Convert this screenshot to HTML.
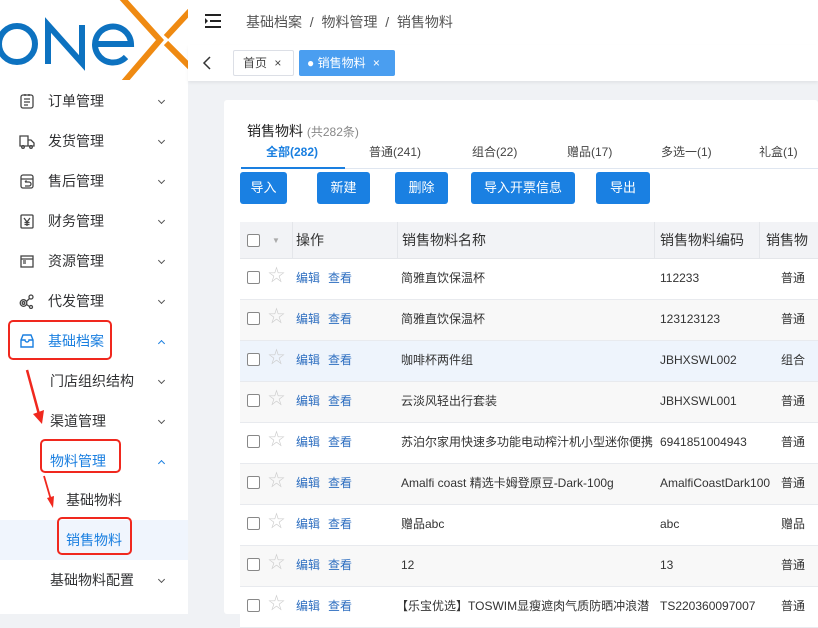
<!DOCTYPE html>
<html><head><meta charset="utf-8">
<style>
*{margin:0;padding:0;box-sizing:border-box}
body{width:818px;height:614px;overflow:hidden;background:#f0f2f5;font-family:"Liberation Sans","Noto Sans CJK SC",sans-serif;font-size:13px;color:#333;position:relative}
.abs{position:absolute}
#side{left:0;top:0;width:188px;height:614px;background:#fff}
.mi{position:absolute;left:0;width:188px;height:40px;line-height:40px;font-size:14px;color:#303133}
.mi .t{position:absolute;left:48px}
.mi .ic{position:absolute;left:19px;top:12px;width:16px;height:16px}
.sub .t{left:50px}
.chev{position:absolute;left:159px;top:17px;width:5px;height:5px;border-right:1px solid #555;border-bottom:1px solid #555;transform:rotate(45deg)}
.chevu{top:20px;transform:rotate(-135deg);border-color:#1a7fe0}
.red{position:absolute;border:2px solid #f0281e;border-radius:5px}
.btn{position:absolute;top:172px;height:32px;background:#1a80e2;color:#fff;border-radius:3px;font-size:13px;line-height:32px;text-align:center}
.row{position:absolute;left:240px;width:578px;height:41px;border-bottom:1px solid #e8eaee;font-size:12px;line-height:38px}
.row span{position:absolute}
.cb{position:absolute;left:7px;top:12px;width:13px;height:13px;border:1px solid #888;border-radius:2px;background:#fff}
.st{position:absolute;left:28px;top:-2px;color:#ccc;font-size:17px}
.lk{color:#2d6ec0}
</style></head><body>
<div id="side" class="abs">
  <svg class="abs" style="left:0;top:0" width="188" height="80" viewBox="0 0 188 80" fill="none">
    <ellipse cx="17" cy="44" rx="18" ry="18" stroke="#0d72c0" stroke-width="6"/>
    <path d="M48 64 V25 L82 63 V25" stroke="#0d72c0" stroke-width="6" stroke-linejoin="miter"/>
    <path d="M94 44 H131 A18 18 0 1 0 126 57" stroke="#0d72c0" stroke-width="6"/>
    <path d="M122 -2 L160 40 L124 82" stroke="#ef8a12" stroke-width="6"/>
    <path d="M190 11 L166 37 M166 43 L190 67" stroke="#ef8a12" stroke-width="6"/>
  </svg>
  <div class="mi" style="top:81px"><svg class="ic" viewBox="0 0 16 16" fill="none" stroke="#444" stroke-width="1.3"><rect x="2" y="2" width="12" height="13" rx="2"/><path d="M5 6h6M5 9h6M5 12h4M6 1v2M10 1v2"/></svg><span class="t">订单管理</span><i class="chev"></i></div>
  <div class="mi" style="top:121px"><svg class="ic" viewBox="0 0 16 16" fill="none" stroke="#444" stroke-width="1.3"><path d="M1 3h8v10H1zM9 7h3l3 3v3H9"/><circle cx="4" cy="14" r="1.3"/><circle cx="12" cy="14" r="1.3"/></svg><span class="t">发货管理</span><i class="chev"></i></div>
  <div class="mi" style="top:161px"><svg class="ic" viewBox="0 0 16 16" fill="none" stroke="#444" stroke-width="1.3"><rect x="2" y="2" width="12" height="13" rx="2"/><path d="M2 6h12M6 9h4a2 2 0 0 1 0 4H6M6 9l1.5-1.5"/></svg><span class="t">售后管理</span><i class="chev"></i></div>
  <div class="mi" style="top:201px"><svg class="ic" viewBox="0 0 16 16" fill="none" stroke="#444" stroke-width="1.3"><rect x="2" y="2" width="12" height="13" rx="1"/><path d="M5 5l3 4 3-4M8 9v4M5.5 9.5h5M5.5 11.5h5"/></svg><span class="t">财务管理</span><i class="chev"></i></div>
  <div class="mi" style="top:241px"><svg class="ic" viewBox="0 0 16 16" fill="none" stroke="#444" stroke-width="1.3"><rect x="2" y="3" width="12" height="11"/><path d="M2 6h12M4 8h3M4 10h3"/></svg><span class="t">资源管理</span><i class="chev"></i></div>
  <div class="mi" style="top:281px"><svg class="ic" viewBox="0 0 16 16" fill="none" stroke="#444" stroke-width="1.3"><circle cx="4.5" cy="10" r="3.3"/><circle cx="4.5" cy="10" r="1.3"/><circle cx="12" cy="4" r="2"/><circle cx="12" cy="14" r="1.5"/><path d="M7.5 8.5l3-3M7.5 11.5l3 2"/></svg><span class="t">代发管理</span><i class="chev"></i></div>
  <div class="mi" style="top:321px;color:#1a7fe0"><svg class="ic" viewBox="0 0 16 16" fill="none" stroke="#1a7fe0" stroke-width="1.4"><path d="M2 7l2-5h8l2 5v7H2zM2 7h4a2 2 0 0 0 4 0h4"/></svg><span class="t">基础档案</span><i class="chev chevu"></i></div>
  <div class="red" style="left:8px;top:320px;width:104px;height:40px"></div>
  <div class="mi sub" style="top:361px"><span class="t">门店组织结构</span><i class="chev"></i></div>
  <div class="mi sub" style="top:401px"><span class="t">渠道管理</span><i class="chev"></i></div>
  <div class="mi sub" style="top:441px;color:#1a7fe0"><span class="t">物料管理</span><i class="chev chevu"></i></div>
  <div class="red" style="left:40px;top:439px;width:81px;height:34px"></div>
  <div class="mi" style="top:480px"><span class="t" style="left:66px">基础物料</span></div>
  <div class="mi" style="top:520px;background:#f0f5fd;color:#1a7fe0"><span class="t" style="left:66px">销售物料</span></div>
  <div class="red" style="left:57px;top:517px;width:75px;height:38px"></div>
  <div class="mi sub" style="top:560px"><span class="t">基础物料配置</span><i class="chev"></i></div>
  <svg class="abs" style="left:0;top:350px" width="60" height="180"><path d="M27 20 L40 68" stroke="#f0281e" stroke-width="2.5"/><path d="M33 64 L42 74 L44 60z" fill="#f0281e"/><path d="M44 126 L51 150" stroke="#f0281e" stroke-width="1.8"/><path d="M47 148 L53 158 L54 146z" fill="#f0281e"/></svg>
</div>
<!-- header -->
<div class="abs" style="left:188px;top:0;width:630px;height:45px;background:#fff"></div>
<svg class="abs" style="left:204px;top:14px" width="18" height="14"><path d="M1 1h16M6 7h11M1 13h16" stroke="#222" stroke-width="2"/><path d="M1 4l3 3-3 3z" fill="#222"/></svg>
<div class="abs" style="left:246px;top:12px;font-size:14px;color:#555">基础档案 &nbsp;/&nbsp; 物料管理 &nbsp;/&nbsp; 销售物料</div>
<div class="abs" style="left:188px;top:45px;width:630px;height:36px;background:#fff;box-shadow:0 2px 3px rgba(0,0,0,.06)"></div>
<svg class="abs" style="left:202px;top:56px" width="10" height="14"><path d="M8 1 L2 7 L8 13" stroke="#333" stroke-width="1.5" fill="none"/></svg>
<div class="abs" style="left:233px;top:50px;width:61px;height:26px;border:1px solid #dcdfe6;border-radius:2px;background:#fff;font-size:12px;line-height:24px;padding-left:9px;color:#444">首页 <span style="margin-left:4px">×</span></div>
<div class="abs" style="left:299px;top:50px;width:96px;height:26px;background:#4a9ef0;border-radius:2px;font-size:12px;line-height:26px;padding-left:8px;color:#fff">● 销售物料 <span style="margin-left:4px">×</span></div>
<!-- card -->
<div class="abs" style="left:224px;top:100px;width:594px;height:514px;background:#fff;border-radius:3px"></div>
<div class="abs" style="left:247px;top:121px;font-size:14px;color:#222">销售物料 <span style="font-size:12px;color:#888">(共282条)</span></div>
<div class="abs" style="left:241px;top:168px;width:577px;height:1px;background:#dfe6f0"></div>
<div class="abs" style="left:241px;top:167px;width:104px;height:2px;background:#1a7fe0"></div>
<div class="abs" style="top:143px;left:0;font-size:12px;color:#444">
<span class="abs" style="left:266px;color:#1a7fe0;font-weight:bold;white-space:nowrap">全部(282)</span>
<span class="abs" style="left:369px;white-space:nowrap">普通(241)</span>
<span class="abs" style="left:472px;white-space:nowrap">组合(22)</span>
<span class="abs" style="left:567px;white-space:nowrap">赠品(17)</span>
<span class="abs" style="left:661px;white-space:nowrap">多选一(1)</span>
<span class="abs" style="left:759px;white-space:nowrap">礼盒(1)</span>
</div>
<div class="btn" style="left:240px;width:47px">导入</div>
<div class="btn" style="left:317px;width:53px">新建</div>
<div class="btn" style="left:395px;width:53px">删除</div>
<div class="btn" style="left:471px;width:104px">导入开票信息</div>
<div class="btn" style="left:596px;width:54px">导出</div>
<!-- table header -->
<div class="row" style="top:222px;background:#f2f3f6;font-size:14px;height:37px;line-height:37px;border-bottom:1px solid #e4e6ea">
  <i class="cb"></i><span style="left:32px;top:0;font-size:8px;color:#aaa">▼</span>
  <span style="left:52px;top:0;height:37px;border-left:1px solid #e4e6ea;padding-left:3px">操作</span>
  <span style="left:157px;top:0;height:37px;border-left:1px solid #e4e6ea;padding-left:4px">销售物料名称</span>
  <span style="left:414px;top:0;height:37px;border-left:1px solid #e4e6ea;padding-left:5px">销售物料编码</span>
  <span style="left:519px;top:0;height:37px;border-left:1px solid #e4e6ea;padding-left:6px;white-space:nowrap">销售物</span>
</div>
<div class="row" style="top:259px;background:#fff"><i class="cb"></i><span class="st">☆</span><span class="lk" style="left:56px">编辑</span><span class="lk" style="left:88px">查看</span><span style="left:161px">简雅直饮保温杯</span><span style="left:420px">112233</span><span style="left:541px">普通</span></div>
<div class="row" style="top:300px;background:#f8f8f8"><i class="cb"></i><span class="st">☆</span><span class="lk" style="left:56px">编辑</span><span class="lk" style="left:88px">查看</span><span style="left:161px">简雅直饮保温杯</span><span style="left:420px">123123123</span><span style="left:541px">普通</span></div>
<div class="row" style="top:341px;background:#eef4fc"><i class="cb"></i><span class="st">☆</span><span class="lk" style="left:56px">编辑</span><span class="lk" style="left:88px">查看</span><span style="left:161px">咖啡杯两件组</span><span style="left:420px">JBHXSWL002</span><span style="left:541px">组合</span></div>
<div class="row" style="top:382px;background:#f8f8f8"><i class="cb"></i><span class="st">☆</span><span class="lk" style="left:56px">编辑</span><span class="lk" style="left:88px">查看</span><span style="left:161px">云淡风轻出行套装</span><span style="left:420px">JBHXSWL001</span><span style="left:541px">普通</span></div>
<div class="row" style="top:423px;background:#fff"><i class="cb"></i><span class="st">☆</span><span class="lk" style="left:56px">编辑</span><span class="lk" style="left:88px">查看</span><span style="left:161px;white-space:nowrap">苏泊尔家用快速多功能电动榨汁机小型迷你便携</span><span style="left:420px">6941851004943</span><span style="left:541px">普通</span></div>
<div class="row" style="top:464px;background:#f8f8f8"><i class="cb"></i><span class="st">☆</span><span class="lk" style="left:56px">编辑</span><span class="lk" style="left:88px">查看</span><span style="left:161px;white-space:nowrap">Amalfi coast 精选卡姆登原豆-Dark-100g</span><span style="left:420px">AmalfiCoastDark100</span><span style="left:541px">普通</span></div>
<div class="row" style="top:505px;background:#fff"><i class="cb"></i><span class="st">☆</span><span class="lk" style="left:56px">编辑</span><span class="lk" style="left:88px">查看</span><span style="left:161px">赠品abc</span><span style="left:420px">abc</span><span style="left:541px">赠品</span></div>
<div class="row" style="top:546px;background:#f8f8f8"><i class="cb"></i><span class="st">☆</span><span class="lk" style="left:56px">编辑</span><span class="lk" style="left:88px">查看</span><span style="left:161px">12</span><span style="left:420px">13</span><span style="left:541px">普通</span></div>
<div class="row" style="top:587px;background:#fff"><i class="cb"></i><span class="st">☆</span><span class="lk" style="left:56px">编辑</span><span class="lk" style="left:88px">查看</span><span style="left:156px;white-space:nowrap">【乐宝优选】TOSWIM显瘦遮肉气质防晒冲浪潜</span><span style="left:420px">TS220360097007</span><span style="left:541px">普通</span></div>
</body></html>
